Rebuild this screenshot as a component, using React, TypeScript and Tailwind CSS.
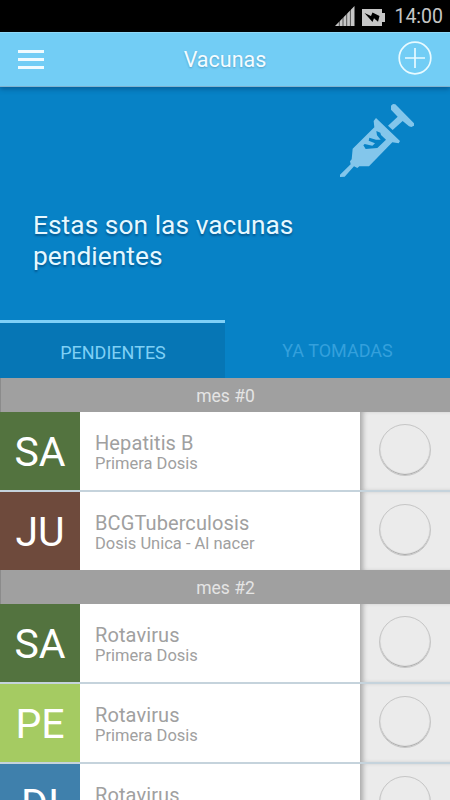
import React from 'react';

type Vaccine = {
  initials: string;
  color: string;
  name: string;
  dose: string;
};

const groups: { title: string; items: Vaccine[] }[] = [
  {
    title: 'mes #0',
    items: [
      { initials: 'SA', color: 'bg-[#53733f]', name: 'Hepatitis B', dose: 'Primera Dosis' },
      { initials: 'JU', color: 'bg-[#6e4a3c]', name: 'BCGTuberculosis', dose: 'Dosis Unica - Al nacer' },
    ],
  },
  {
    title: 'mes #2',
    items: [
      { initials: 'SA', color: 'bg-[#53733f]', name: 'Rotavirus', dose: 'Primera Dosis' },
      { initials: 'PE', color: 'bg-[#a5cb62]', name: 'Rotavirus', dose: 'Primera Dosis' },
      { initials: 'DI', color: 'bg-[#3f80ac]', name: 'Rotavirus', dose: 'Primera Dosis' },
    ],
  },
];

const StatusBar = () => (
  <div className="flex h-8 shrink-0 items-center justify-end bg-black pr-[7px] text-[#c6c6c6]">
    <svg className="mr-px h-5 w-5" viewBox="0 0 20 20" fill="currentColor">
      <path d="M0 20 19.500 0V20z" />
      <path d="M4.300 14V20M8 10V20M11.700 6V20M15.400 2V20" stroke="#000" strokeWidth="0.600" />
    </svg>
    <svg className="mt-0.5 ml-1.5 h-[17px] w-[23px]" viewBox="0 0 23 17">
      <path fill="currentColor" d="M0 0H20V4H23V13H20V17H0z" />
      <path fill="#000" d="M2.500 4 9 7 10.500 3.500 17.500 7 16 12.800 12 9.200 10.500 13z" />
    </svg>
    <span className="ml-[9px] pt-0.5 text-[19.500px] leading-8">14:00</span>
  </div>
);

const AppBar = () => (
  <div className="relative z-10 flex h-[55px] shrink-0 items-center justify-between border-t border-b border-t-[#8fd9f8] border-b-[#7fb3cf] bg-[#72cdf5] pr-[18px] pl-[18px] shadow-[0_2px_5px_rgba(0,40,80,0.4)]">
    <div className="flex w-[34px] flex-col gap-[5px]">
      <div className="h-[3px] w-[26px] bg-[#f0fbff]" />
      <div className="h-[3px] w-[26px] bg-[#f0fbff]" />
      <div className="h-[3px] w-[26px] bg-[#f0fbff]" />
    </div>
    <h1 className="pt-px text-[21.500px] text-[#f4fcff] [text-shadow:0_1px_2px_rgba(0,60,100,0.3)]">Vacunas</h1>
    <svg className="mb-[3px] h-[34px] w-[34px]" viewBox="0 0 34 34" fill="none" stroke="#e8faff">
      <circle cx="17" cy="17" r="15.800" strokeWidth="1.700" />
      <path d="M17 7V27M7 17H27" strokeWidth="1.700" />
    </svg>
  </div>
);

const Syringe = () => (
  <svg className="h-[74px] w-[75px]" viewBox="60 42 225 222" fill="#83c6eb">
    <path d="M213 47 219 42 226 43 282 100V107L274 111 267 109 248 93 218 120 204 107 233 80 213 59z" />
    <path d="M168 84 240 153 236 160 217 157 147 229H118L112 234 102 229 74 260 60 261V254L92 223 90 214 95 208 98 176 163 112 161 93z" />
    <path
      fill="#0782c6"
      d="M169 123 181 128 183 135 198 149 172 174 137 177 130 166 134 162 157 167 165 160 146 152 148 143 168 149 182 149 171 136z"
    />
  </svg>
);

const Row = ({ item }: { item: Vaccine }) => (
  <div className="flex h-[78px] shrink-0">
    <div className={`flex w-20 items-center justify-center pt-0.5 text-[41px] leading-none text-white ${item.color}`}>
      {item.initials}
    </div>
    <div className="flex w-[280px] flex-col bg-white pt-[19px] pl-[15px] text-[#a0a0a0]">
      <span className="text-[20px] leading-6 tracking-[0.1px]">{item.name}</span>
      <span className="text-[16.500px] leading-[18px]">{item.dose}</span>
    </div>
    <div className="flex flex-1 justify-center bg-[#ebebeb] pt-[11.500px] shadow-[inset_5px_0_5px_-2px_rgba(0,0,0,0.28)]">
      <div className="h-[52px] w-[52px] rounded-full border border-[#c6c6c6] bg-[#ebebeb] shadow-[inset_0_-1px_1px_rgba(0,0,0,0.3)]" />
    </div>
  </div>
);

const App = () => {
  return (
    <div className="flex h-[800px] w-[450px] flex-col overflow-hidden bg-white font-[Roboto,sans-serif]">
      <StatusBar />
      <AppBar />
      <div className="flex h-[291px] shrink-0 flex-col bg-[#0782c6]">
        <div className="flex justify-end pt-[17px] pr-[35px]">
          <Syringe />
        </div>
        <p className="mt-8 w-[320px] pl-[33px] text-[26.300px] leading-[31px] tracking-[0.05px] text-[#e6f8ff] [text-shadow:0_2px_2px_rgba(0,40,80,0.45)]">
          Estas son las vacunas pendientes
        </p>
        <div className="mt-auto flex h-[58px] text-[18px]">
          <div className="flex w-[225px] items-center justify-center border-t-[3px] border-[#7fd0f7] bg-[#0676b5] pt-1 pl-px text-[#7fd0f5]">
            PENDIENTES
          </div>
          <div className="flex w-[225px] items-center justify-center pt-0.5 text-[#34a0dc]">YA TOMADAS</div>
        </div>
      </div>
      {groups.map((group) => (
        <React.Fragment key={group.title}>
          <div className="flex h-[34px] shrink-0 items-center justify-center border-l border-[#8b8b8b] bg-[#a0a0a0] pt-[3px] text-[17.500px] text-[#e4e4e4]">
            {group.title}
          </div>
          <div className="flex shrink-0 flex-col gap-0.5 bg-[#c5d3dc]">
            {group.items.map((item, i) => (
              <Row key={i} item={item} />
            ))}
          </div>
        </React.Fragment>
      ))}
    </div>
  );
};

export default App;
